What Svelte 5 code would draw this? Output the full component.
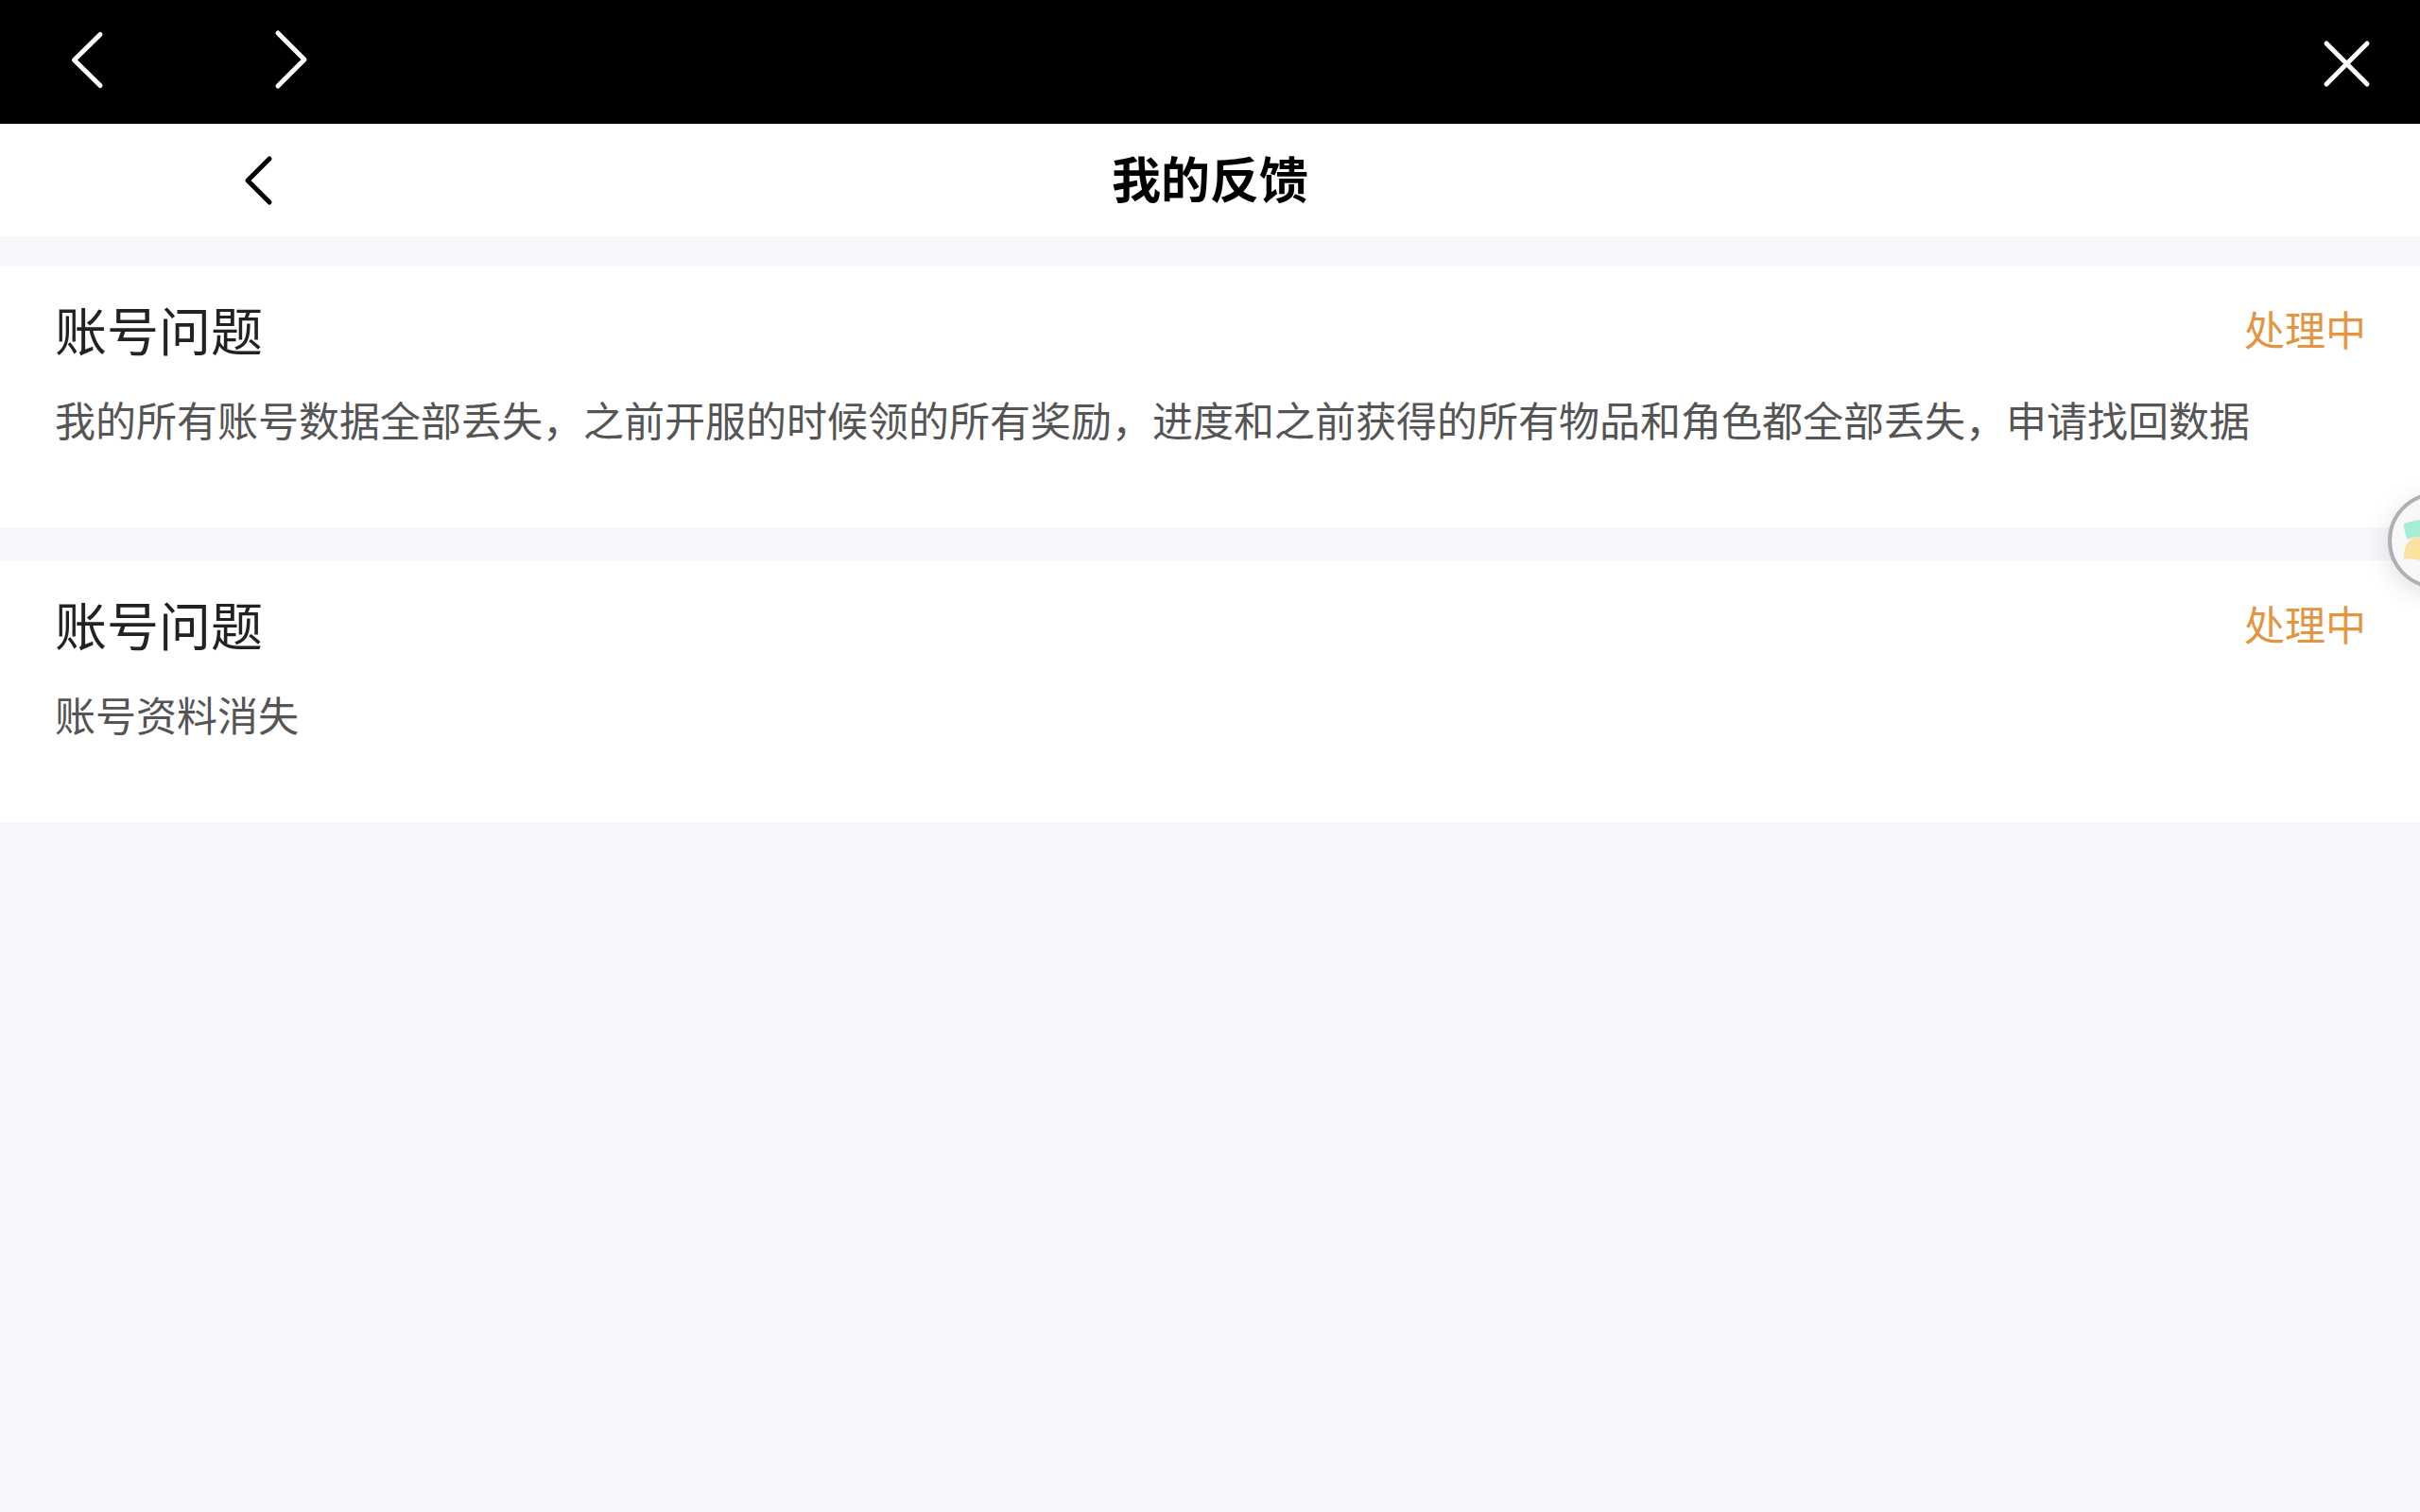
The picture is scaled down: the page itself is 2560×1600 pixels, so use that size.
<script lang="ts">
  interface Feedback {
    id: number;
    title: string;
    status: string;
    content: string;
  }

  const feedbacks: Feedback[] = [
    {
      id: 1,
      title: '账号问题',
      status: '处理中',
      content:
        '我的所有账号数据全部丢失，之前开服的时候领的所有奖励，进度和之前获得的所有物品和角色都全部丢失，申请找回数据',
    },
    { id: 2, title: '账号问题', status: '处理中', content: '账号资料消失' },
  ];
</script>

<div class="page" lang="zh-CN">
  <!-- Webview toolbar -->
  <nav class="toolbar">
    <button type="button" aria-label="后退">
      <svg viewBox="0 0 64 64"><path d="M46 5.500 L18.500 32.500 L46 59.500" /></svg>
    </button>
    <button type="button" aria-label="前进">
      <svg viewBox="0 0 64 64"><path d="M18 4 L46 32 L18 60" /></svg>
    </button>
    <button type="button" class="close" aria-label="关闭">
      <svg viewBox="0 0 64 64"><path d="M11 15 L54 58 M54 15 L11 58" /></svg>
    </button>
  </nav>

  <header class="header">
    <button type="button" class="back" aria-label="返回">
      <svg viewBox="0 0 64 64"><path d="M43 12 L20 35 L43 58" /></svg>
    </button>
    <h1>我的反馈</h1>
  </header>

  <main class="list">
    {#each feedbacks as item (item.id)}
      <article class="card">
        <div class="row">
          <h2>{item.title}</h2>
          <span class="status">{item.status}</span>
        </div>
        <p>{item.content}</p>
      </article>
    {/each}
  </main>

  <!-- Floating ball, docked half way past the right edge -->
  <button type="button" class="ball" aria-label="悬浮球">
    <svg viewBox="0 0 64 160">
      <defs>
        <radialGradient id="ball-shadow">
          <stop offset="0.600" stop-color="#000" stop-opacity="0.080" />
          <stop offset="0.800" stop-color="#000" stop-opacity="0.025" />
          <stop offset="1" stop-color="#000" stop-opacity="0" />
        </radialGradient>
      </defs>
      <circle cx="81" cy="86" r="74" fill="url(#ball-shadow)" />
      <circle cx="81" cy="80" r="49" fill="#f8f8fb" stroke="#b0b0b0" stroke-width="4" />
      <path d="M47 62 Q56 59 64 58 V76 Q56 76 51 79 Q47 72 47 62 Z" fill="#a6eed6" />
      <path d="M47 100 Q46 86 54 79 Q59 76 64 76 V101 Q55 98 47 100 Z" fill="#fbe2a0" />
    </svg>
  </button>
</div>

<style>
  :global(body) {
    background: #f6f7fb;
  }

  .page {
    position: relative;
    font-family: 'Noto Sans CJK SC', sans-serif;
    color: #222;
  }

  button {
    display: flex;
    padding: 0;
    border: 0;
    background: none;
    cursor: pointer;
  }

  .toolbar svg,
  .back svg {
    display: block;
    width: 64px;
    height: 64px;
    fill: none;
    stroke: currentColor;
    stroke-width: 5;
    stroke-linecap: round;
    stroke-linejoin: round;
  }

  .toolbar {
    display: flex;
    align-items: center;
    gap: 152px;
    padding: 31px 46px 36px 60px;
    background: #000;
  }

  .toolbar button {
    color: #fff;
  }

  .toolbar .close {
    margin-left: auto;
  }

  .header {
    display: grid;
    grid-template-columns: 1fr auto 1fr;
    align-items: center;
    padding: 17px 0 23px;
    background: #fff;
    color: #000;
  }

  .back {
    justify-self: start;
    margin-left: 242px;
    color: #000;
  }

  h1,
  h2,
  p {
    margin: 0;
  }

  h1 {
    font-size: 52px;
    line-height: 79px;
    font-weight: 700;
  }

  .list {
    display: flex;
    flex-direction: column;
    gap: 35px;
    margin-top: 31px;
  }

  .card {
    padding: 26px 57px 83px 58px;
    background: #fff;
  }

  .row {
    display: flex;
    align-items: center;
    justify-content: space-between;
    margin-bottom: 24px;
  }

  h2 {
    font-size: 55px;
    line-height: 80px;
    font-weight: 400;
  }

  .status {
    font-size: 43px;
    line-height: 64px;
    color: #e3963f;
  }

  p {
    font-size: 43px;
    line-height: 64px;
    color: #555;
  }

  .ball {
    position: absolute;
    top: 492px;
    right: 0;
  }

  .ball svg {
    display: block;
    width: 64px;
    height: 160px;
    overflow: hidden;
  }
</style>
